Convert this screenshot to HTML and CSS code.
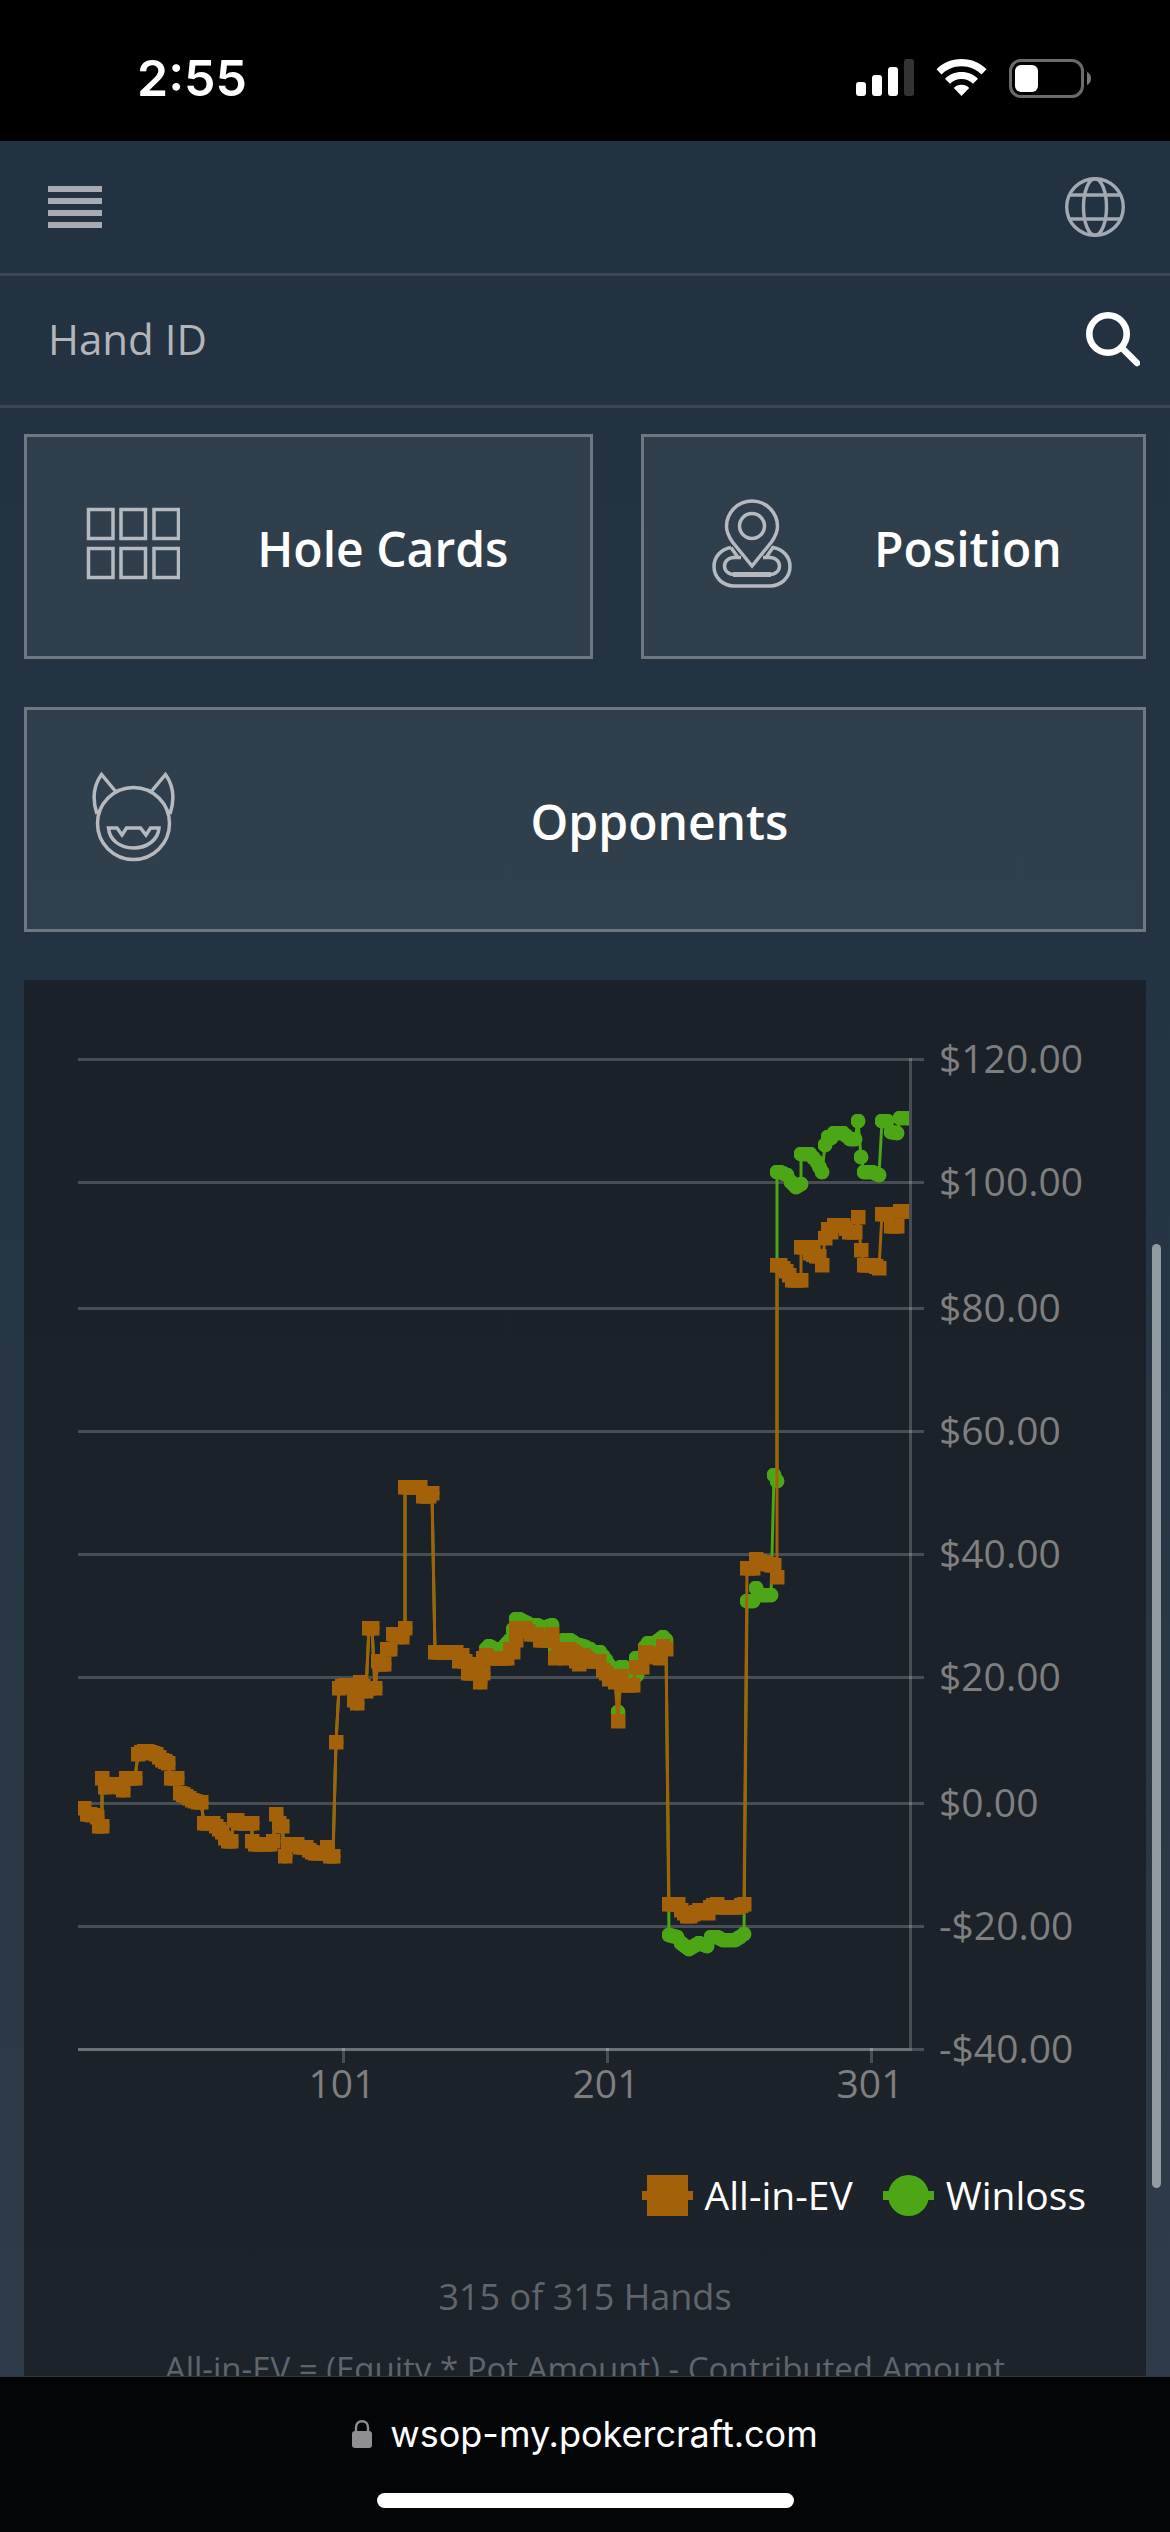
FILE: index.html
```html
<!DOCTYPE html>
<html lang="en">
<head>
    <meta charset="UTF-8">
    <meta name="viewport" content="width=device-width, initial-scale=1.0">
    <title>PokerCraft</title>
    <link rel="stylesheet" href="styles.css">
</head>
<body>
    <!-- Status bar -->
    <div class="status-bar">
        <span class="time">2:55</span>
        <div class="status-icons">
            <svg width="58" height="38" viewBox="0 0 58 38" fill="#fff" aria-hidden="true">
                <rect x="0" y="23" width="10" height="14" rx="3"/>
                <rect x="16" y="16" width="10" height="21" rx="3"/>
                <rect x="32" y="8" width="10" height="29" rx="3"/>
                <rect x="48" y="0" width="10" height="37" rx="3" fill="#333"/>
            </svg>
            <svg width="51" height="38" viewBox="0 0 51 38" fill="#fff" aria-hidden="true">
                <path d="M25.500 0C35.500 0 44.500 4 50.500 10.300L45.500 15.500C40.500 10.500 33.500 7.300 25.500 7.300S10.500 10.500 5.500 15.500L.5 10.300C6.500 4 15.500 0 25.500 0z"/>
                <path d="M25.500 13C32 13 38 15.600 42 19.800L37 24.800C34 21.900 30 20 25.500 20S17 21.900 14 24.800L9 19.800C13 15.600 19 13 25.500 13z"/>
                <path d="M25.500 25.800C28.500 25.800 31.200 26.900 33.200 28.900L25.500 37L17.800 28.900C19.800 26.900 22.500 25.800 25.500 25.800z"/>
            </svg>
            <svg width="82" height="39" viewBox="0 0 82 39" aria-hidden="true">
                <rect x="1.500" y="1.500" width="72" height="36" rx="10.500" fill="none" stroke="#6b6b6b" stroke-width="3"/>
                <rect x="6" y="6" width="23" height="27" rx="6" fill="#fff"/>
                <path d="M78 13c2.500 1 4 3.500 4 6.500s-1.500 5.500-4 6.500z" fill="#777"/>
            </svg>
        </div>
    </div>

    <main>
        <!-- Header -->
        <header class="top-bar">
            <button class="icon-btn" aria-label="Menu">
                <svg width="54" height="42" viewBox="0 0 54 42" fill="#a7abb3">
                    <path d="M0 0h54v6H0zM0 12h54v6H0zM0 24h54v6H0zM0 36h54v6H0z"/>
                </svg>
            </button>
            <button class="icon-btn" aria-label="Language">
                <svg width="60" height="60" viewBox="0 0 60 60" fill="none" stroke="#a3a9b2" stroke-width="3.400">
                    <circle cx="30" cy="30" r="28.300"/>
                    <ellipse cx="30" cy="30" rx="11.500" ry="28.300"/>
                    <path d="M5 18h50M5 42h50"/>
                </svg>
            </button>
        </header>

        <form class="search">
            <input type="text" id="handId" placeholder="Hand ID" aria-label="Hand ID">
            <button class="icon-btn" type="button" aria-label="Search">
                <svg width="54" height="55" viewBox="0 0 54 55" fill="none" stroke="#fff">
                    <circle cx="22" cy="22" r="18.700" stroke-width="6.600"/>
                    <path d="M36 36L51 51" stroke-width="6.500" stroke-linecap="round"/>
                </svg>
            </button>
        </form>

        <div class="content">
            <!-- Cards -->
            <nav class="cards">
                <a class="card" href="#hole-cards">
                    <svg class="card-icon" viewBox="0 0 94 96">
                        <path d="M2.500 10.500h24.500v29h-24.500zM35 10.500h24.500v29h-24.500zM68 10.500h24.500v29h-24.500zM2.500 49.500h24.500v29h-24.500zM35 49.500h24.500v29h-24.500zM68 49.500h24.500v29h-24.500z"/>
                    </svg>
                    <span class="card-label">Hole Cards</span>
                </a>
                <a class="card" href="#position">
                    <svg class="card-icon" viewBox="0 0 94 96">
                        <path d="M49 67L29.500 43C26 38 23.500 33 23.500 27.500a25.500 25.500 0 0 1 51 0C74.500 33 72 38 68.500 43z"/>
                        <circle cx="49" cy="27" r="12.500"/>
                        <path d="M28 48.500C18 50 11 58 11 67.500C11 78.500 20 87 31 87H67C78 87 87 78.500 87 67.500C87 58 80 50 70 48.500L63 58.500M28 48.500L35 58.500"/>
                        <path d="M38 58.500H31C25.500 58.500 21.500 62.500 21.500 67S25.500 75.500 31 75.500H67C72.500 75.500 76.500 71.500 76.500 67S72.500 58.500 67 58.500H60"/>
                        <path d="M30 75.500H68" stroke-width="5"/>
                    </svg>
                    <span class="card-label">Position</span>
                </a>
                <a class="card" href="#opponents">
                    <svg class="card-icon" viewBox="0 0 94 96">
                        <circle cx="47.500" cy="51.500" r="36"/>
                        <path d="M11 42C6 27 8 13 15.500 2.500L30.500 20.500M84 42C89 27 87 13 79.500 2.500L64.500 20.500"/>
                        <path d="M22.500 56H31L36 63L40.500 56H54.500L60 63L64.500 56H73C72 68 61 76 47.500 76S23.500 68 22.500 56z"/>
                    </svg>
                    <span class="card-label">Opponents</span>
                </a>
            </nav>

            <!-- Winloss chart -->
            <section class="panel">
                <svg class="chart" viewBox="0 0 1122 1140" role="img" aria-label="All-in-EV and Winloss by hand">
                    <defs>
                        <marker id="square" markerUnits="userSpaceOnUse" markerWidth="15" markerHeight="15" refX="7.500" refY="7.500">
                            <rect width="15" height="15" fill="#a36109"/>
                        </marker>
                        <marker id="dot" markerUnits="userSpaceOnUse" markerWidth="15" markerHeight="15" refX="7.500" refY="7.500">
                            <circle cx="7.500" cy="7.500" r="7.500" fill="#4ca615"/>
                        </marker>
                        <clipPath id="plot"><rect x="54" y="78" width="831" height="993"/></clipPath>
                    </defs>

                    <path class="grid" d="M54 78h846v3H54zM54 201h846v3H54zM54 327h846v3H54zM54 450h846v3H54zM54 573h846v3H54zM54 696h846v3H54zM54 822h846v3H54zM54 945h846v3H54zM54 1068h846v3H54z"/>
                    <path class="grid" d="M885 78h3v993h-3zM318 1068h3v15h-3zM582 1068h3v15h-3zM846 1068h3v15h-3z"/>
                    <path class="grid" d="M54 1068h831v3H54z"/>

                    <g clip-path="url(#plot)">
                        <polyline class="line winloss" id="winloss"/>
                        <polyline class="line ev" id="ev"/>
                    </g>

                    <g class="axis-text">
                        <text x="915" y="93">$120.00</text>
                        <text x="915" y="216">$100.00</text>
                        <text x="915" y="342">$80.00</text>
                        <text x="915" y="465">$60.00</text>
                        <text x="915" y="588">$40.00</text>
                        <text x="915" y="711">$20.00</text>
                        <text x="915" y="837">$0.00</text>
                        <text x="915" y="960">-$20.00</text>
                        <text x="915" y="1083">-$40.00</text>
                    </g>
                    <g class="axis-text" text-anchor="middle">
                        <text x="318" y="1118">101</text>
                        <text x="582" y="1118">201</text>
                        <text x="846" y="1118">301</text>
                    </g>
                </svg>

                <ul class="legend">
                    <li>
                        <svg width="51" height="41" viewBox="0 0 51 41" fill="#a36109" aria-hidden="true">
                            <path d="M0 16h51v9H0zM5 0h41v41H5z"/>
                        </svg>
                        All-in-EV
                    </li>
                    <li>
                        <svg width="51" height="41" viewBox="0 0 51 41" fill="#4ca615" aria-hidden="true">
                            <path d="M0 16h51v9H0z"/>
                            <circle cx="25.500" cy="20.500" r="20.500"/>
                        </svg>
                        Winloss
                    </li>
                </ul>

                <p class="note">315 of 315 Hands</p>
                <p class="note formula">All-in-EV = (Equity * Pot Amount) - Contributed Amount</p>
            </section>
        </div>

        <div class="scrollbar"></div>
    </main>

    <!-- Browser bar -->
    <footer class="browser-bar">
        <button class="address">
            <svg width="20" height="28" viewBox="0 0 20 28" aria-hidden="true">
                <path d="M4 13V7.500C4 3.700 6.500 1.200 10 1.200S16 3.700 16 7.500V13" fill="none" stroke="#8e8e93" stroke-width="2.400"/>
                <rect x="0" y="11" width="20" height="17" rx="3" fill="#8e8e93"/>
            </svg>
            wsop-my.pokercraft.com
        </button>
        <div class="home-indicator"></div>
    </footer>

    <script>
        // both lines are the same until the first all-in
        const start = "60,828 63,834 69,835 73,837 75,846 78,846 78,798 81,807 89,804 96,807 99,810 102,798 111,798 114,774 120,771 123,771 132,774 135,777 138,780 144,783 147,798 153,798 156,813 162,816 168,820 174,822 177,822 180,843 189,843 192,846 195,849 198,852 201,858 204,861 207,861 210,840 213,840 216,843 228,843 228,861 231,864 246,864 249,861 252,834 255,843 258,846 261,876 264,864 273,864 276,867 282,867 285,870 288,872 291,873 299,873 303,867 306,876 309,876 312,762 315,708 321,705 326,706 330,720 333,723 336,702 342,711 345,648 348,648 351,708 354,681 357,684 360,684 363,669 366,669 369,654 375,654 378,657 381,648 381,507 396,507 399,516 405,516 408,513 411,672 424,672 432,672 435,681 438,675 441,681 444,693 447,693 450,684 453,690 456,702 459,693 ";
        const winloss = start + "462,669 465,666 471,669 478,669 486,660 492,639 495,639 501,642 507,645 513,645 519,648 528,645 531,670 540,660 546,660 552,664 559,666 566,669 570,672 576,672 582,680 585,685 588,688 591,691 594,732 597,687 600,687 606,697 612,678 613,695 621,667 624,663 631,663 639,657 642,660 645,955 653,957 657,963 665,969 675,963 683,966 687,957 693,957 699,960 711,960 716,957 720,954 723,621 729,621 732,608 735,615 747,615 750,495 753,501 753,192 756,192 763,195 767,202 772,207 777,204 777,174 786,174 793,182 798,192 801,165 804,157 807,158 810,153 819,153 826,159 831,159 834,141 837,177 840,192 848,192 855,195 858,141 863,141 867,152 873,153 876,138 885,138";
        const ev = start + "459,678 462,675 465,678 474,678 483,678 486,669 489,672 492,660 492,648 496,648 501,648 504,651 507,654 513,654 516,660 524,660 528,654 528,660 531,678 540,669 541,678 545,669 551,673 552,681 555,684 559,675 561,677 566,681 571,681 575,681 579,690 582,693 585,699 588,697 591,702 594,741 597,696 600,705 609,705 612,687 618,687 621,672 627,675 636,678 639,666 642,669 645,924 654,924 657,930 663,936 666,936 675,930 684,933 686,927 693,924 696,927 705,927 714,927 720,924 723,588 729,588 732,579 735,581 739,582 747,585 750,585 753,597 753,285 756,285 762,291 765,295 768,300 777,300 777,267 789,267 786,273 792,276 795,276 798,285 801,258 804,249 807,252 810,245 819,245 825,252 831,252 834,237 837,270 840,285 849,285 855,288 858,234 864,234 867,246 873,246 876,231 879,231 885,231";

        // one marker per hand, hands are about 3 units apart
        function drawLine(id, data) {
            const points = data.split(" ").map(p => p.split(",").map(Number));
            const result = [points[0]];
            for (let i = 1; i < points.length; i++) {
                const [x1, y1] = points[i - 1];
                const [x2, y2] = points[i];
                const steps = Math.max(1, Math.round((x2 - x1) / 3));
                for (let s = 1; s <= steps; s++) {
                    result.push([x1 + (x2 - x1) * s / steps, y1 + (y2 - y1) * s / steps]);
                }
            }
            document.getElementById(id).setAttribute("points", result.join(" "));
        }

        drawLine("winloss", winloss);
        drawLine("ev", ev);
    </script>
</body>
</html>
```
FILE: styles.css
```css
* {
    box-sizing: border-box;
}
body {
    display: flex;
    flex-direction: column;
    height: 100vh;
    margin: 0;
    background-color: #000;
    color: #fff;
    font-family: "Open Sans", "Noto Sans", sans-serif;
}
svg {
    display: block;
}
button {
    padding: 0;
    border: none;
    background: none;
    color: inherit;
    font: inherit;
    cursor: pointer;
}

/* Status bar */
.status-bar {
    display: flex;
    flex: none;
    align-items: center;
    justify-content: space-between;
    height: 141px;
    padding: 15px 79px 0 137px;
}
.time {
    font-family: Inter, sans-serif;
    font-size: 50px;
    font-weight: 600;
    line-height: 60px;
}
.status-icons {
    display: flex;
    align-items: center;
    gap: 22px;
}

/* Page */
main {
    position: relative;
    flex: 1;
    min-height: 0;
    overflow: hidden;
    background: linear-gradient(#233240, #243341 35%, #2e3c4a);
}
.top-bar {
    display: flex;
    align-items: center;
    justify-content: space-between;
    height: 135px;
    padding: 0 45px 0 48px;
    border-bottom: 3px solid #3b4853;
}
.search {
    display: flex;
    align-items: center;
    height: 132px;
    padding: 0 30px 3px 48px;
    border-bottom: 3px solid #3b4853;
}
.search input {
    flex: 1;
    min-width: 0;
    padding: 0;
    border: none;
    outline: none;
    background: none;
    color: #fff;
    font-family: inherit;
    font-size: 42px;
    line-height: 60px;
}
.search input::placeholder {
    color: #b2b6b9;
    opacity: 1;
}
.content {
    padding: 26px 24px 0;
}

/* Cards */
.cards {
    display: flex;
    flex-wrap: wrap;
    gap: 48px;
}
.card {
    display: flex;
    flex: 1 1 auto;
    align-items: center;
    height: 225px;
    padding-left: 59px;
    border: 3px solid #6d7880;
    background-color: rgba(255, 255, 255, 0.06);
    color: #fff;
    font-size: 48px;
    font-weight: 600;
    text-decoration: none;
}
.card-icon {
    flex: none;
    width: 94px;
    height: 96px;
    fill: none;
    stroke: #b5babf;
    stroke-width: 3.5;
}
.card-label {
    flex: 1;
    padding: 3px 50px 0 46px;
    text-align: center;
    white-space: nowrap;
}

/* Chart */
.panel {
    margin-top: 48px;
    padding-bottom: 48px;
    background: linear-gradient(#1a2129, #1c232b);
}
.chart {
    width: 100%;
    height: auto;
}
.grid {
    fill: rgba(255, 255, 255, 0.2);
}
.line {
    fill: none;
    stroke-width: 3;
}
.winloss {
    stroke: #4ca615;
    marker: url(#dot);
}
.ev {
    stroke: #a36109;
    marker: url(#square);
}
.axis-text {
    fill: #7f7f7f;
    font-size: 39px;
}
.legend {
    display: flex;
    justify-content: flex-end;
    gap: 30px;
    margin: 48px 0;
    padding: 0 60px 0 0;
    list-style: none;
    font-size: 39px;
    line-height: 54px;
}
.legend li {
    display: flex;
    align-items: center;
    gap: 12px;
}
.note {
    margin: 0 0 18px;
    color: #60656b;
    font-size: 36px;
    line-height: 54px;
    text-align: center;
}
.formula {
    font-size: 33px;
}
.scrollbar {
    position: absolute;
    top: 1103px;
    right: 9px;
    width: 9px;
    height: 944px;
    border-radius: 5px;
    background-color: #929aa2;
}

/* Browser bar */
.browser-bar {
    display: flex;
    flex: none;
    flex-direction: column;
    align-items: center;
    justify-content: space-between;
    height: 156px;
    padding: 30px 0 24px;
    border-top: 1px solid #34373a;
    background-color: #040507;
}
.address {
    display: flex;
    align-items: center;
    gap: 18px;
    font-family: Inter, sans-serif;
    font-size: 36px;
    line-height: 54px;
}
.home-indicator {
    width: 417px;
    height: 15px;
    border-radius: 8px;
    background-color: #fff;
}
```
